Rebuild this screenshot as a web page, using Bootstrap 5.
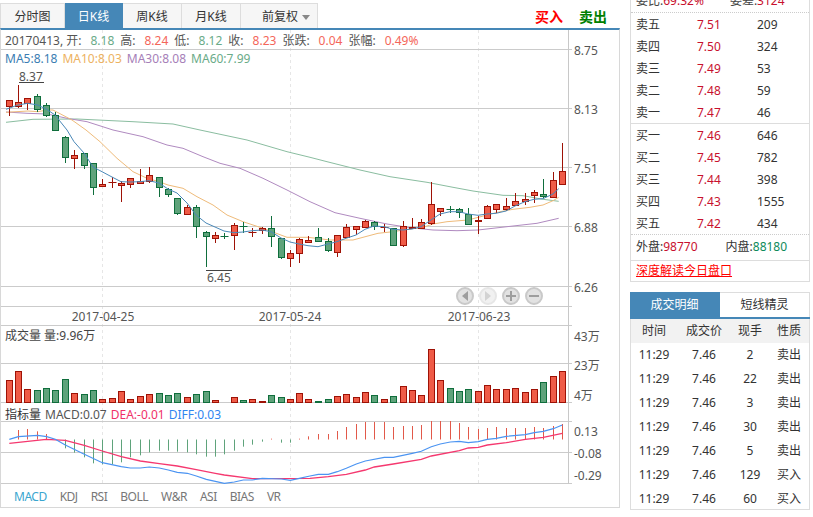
<!DOCTYPE html>
<html lang="zh">
<head>
<meta charset="utf-8">
<title>K线</title>
<link href="https://cdn.jsdelivr.net/npm/bootstrap@5.3.0/dist/css/bootstrap.min.css" rel="stylesheet">
<style>
html,body{margin:0;height:517px;overflow:hidden;background:#fff}
body{font:12px/1.2 "Noto Sans","Noto Sans CJK SC",sans-serif;color:#444}
.stage{width:813px;height:517px}
.leftpane{width:620px;padding-top:3px;position:relative}
.tabbar{height:25px}
.ktab{height:25px;padding-top:2px;border:1px solid #ddd;border-bottom:0;border-left-width:0;background:#f6f6f6;color:#333;display:flex;align-items:center;justify-content:center;text-decoration:none;font-size:12px}
.ktab:first-child{border-left-width:1px}
.ktab-on{background:#4587b7;border-color:#4587b7;color:#fff}
.w1{width:65px}.w2{width:58px}.w3{width:59px}.w4{width:77px;justify-content:flex-start;padding-left:21px}
.caret{display:inline-block;width:0;height:0;border:4px solid transparent;border-top:5px solid #888;border-bottom:0;margin-left:4px}
.tradebtn{font-size:14px;font-weight:700;margin-right:16px;line-height:27px}
.tradebtn-buy{color:#f00}.tradebtn-sell{color:#008000;margin-right:13px}
.chartbox{border:1px solid #d8d8d8;border-top:2px solid #4587b7;height:480px;position:relative}
.chartsvg{display:block;width:618px;height:454px}
.chartsvg text{font:12px "Noto Sans","Noto Sans CJK SC",sans-serif;fill:#555}
.overlay{position:absolute;left:4px;white-space:nowrap;line-height:16px;color:#555;display:flex}
.ov-info{top:3px}.ov-ma{top:21px;gap:5px}.ov-vol{top:298px;color:#444}.ov-macd{top:377px;gap:4px}
.tx-r{color:#f4665a}.tx-g{color:#6aab88}.tx-b{color:#3a7db2}.tx-o{color:#edb261}.tx-p{color:#a680b8}
.tx-pk{color:#f03068}.tx-bl{color:#2f86f0}
.ov-info span{margin-right:9px}
.ov-info span.tx-r,.ov-info span.tx-g{margin-right:6px}
.idxbar{height:24px;gap:13px;padding-left:13px;padding-top:2px;color:#777;align-items:center;letter-spacing:-.5px}
.idx-on{color:#3aa6cf}
.rightpane{width:180px;margin-left:10px}
.quotebox{border:1px solid #ddd;border-top:0;height:282px}
.clipline{height:12px;overflow:hidden;padding-left:5px;border-bottom:1px dotted #ccc;box-sizing:content-box}
.clipline div{margin-top:-8px;line-height:18px;gap:26px}
.qrow{height:22px;padding-left:5px;align-items:center;display:flex;color:#333}
.qrow span:first-child{width:61px}.qrow span:nth-child(2){width:60px;color:#c8102e}
.qgroup{height:111px;padding-top:1px}
.qgroup-a{border-bottom:1px solid #ddd}
.qgroup-b{border-bottom:1px dotted #ccc}
.qsum{height:26px;padding-left:5px;gap:28px;align-items:center;border-bottom:1px solid #ddd;color:#333}
.qlink{height:21px;padding-left:5px;color:#f00;text-decoration:underline;display:flex;align-items:center}
.t-red{color:#c8102e}.t-green{color:#0d8a5a}
.dealbox{margin-top:10px;border:1px solid #ddd;border-top:0;height:218px}
.dealtabs{height:27px;border-bottom:2px solid #4587b7;margin:0 -1px}
.dealtab{width:90px;display:flex;align-items:center;justify-content:center;font-size:12px;color:#333;border-top:1px solid #ddd;border-right:1px solid #ddd;height:25px}
.dealtab-on{background:#4587b7;color:#fff;border-color:#4587b7}
.dealtable{table-layout:fixed;width:178px;margin:0;color:#333;--bs-table-bg:transparent}
.dealtable th,.dealtable td{padding:2px 0 0;height:24px;text-align:center;font-weight:400;border:0;vertical-align:middle;font-size:12px;color:#333}
.dealtable th{background:#f2f2f2;height:23.5px;padding-top:1px}
</style>
</head>
<body>
<div class="stage d-flex">
  <div class="leftpane">
    <div class="tabbar d-flex">
      <a class="ktab w1">分时图</a>
      <a class="ktab ktab-on w2">日K线</a>
      <a class="ktab w3">周K线</a>
      <a class="ktab w3">月K线</a>
      <a class="ktab w4">前复权<i class="caret"></i></a>
      <span class="tradebtn tradebtn-buy ms-auto">买入</span>
      <span class="tradebtn tradebtn-sell">卖出</span>
    </div>
    <div class="chartbox">
      <svg class="chartsvg" id="chart" viewBox="1 30 618 454" xmlns="http://www.w3.org/2000/svg"></svg>
      <div class="overlay ov-info"><span>20170413, 开:</span><span class="tx-g">8.18</span><span>高:</span><span class="tx-r">8.24</span><span>低:</span><span class="tx-g">8.12</span><span>收:</span><span class="tx-r">8.23</span><span>张跌:</span><span class="tx-r">0.04</span><span>张幅:</span><span class="tx-r">0.49%</span></div>
      <div class="overlay ov-ma"><span class="tx-b">MA5:8.18</span><span class="tx-o">MA10:8.03</span><span class="tx-p">MA30:8.08</span><span class="tx-g">MA60:7.99</span></div>
      <div class="overlay ov-vol">成交量 量:9.96万</div>
      <div class="overlay ov-macd"><span style="color:#333">指标量</span><span>MACD:0.07</span><span class="tx-pk">DEA:-0.01</span><span class="tx-bl">DIFF:0.03</span></div>
      <div class="idxbar d-flex"><span class="idx-on">MACD</span><span>KDJ</span><span>RSI</span><span>BOLL</span><span>W&amp;R</span><span>ASI</span><span>BIAS</span><span>VR</span></div>
    </div>
  </div>
  <div class="rightpane">
    <div class="quotebox">
      <div class="clipline"><div class="d-flex"><span>委比:<span class="t-red">69.32%</span></span><span>委差:<span class="t-red">3124</span></span></div></div>
      <div class="qgroup qgroup-a">
        <div class="qrow"><span>卖五</span><span>7.51</span><span>209</span></div>
        <div class="qrow"><span>卖四</span><span>7.50</span><span>324</span></div>
        <div class="qrow"><span>卖三</span><span>7.49</span><span>53</span></div>
        <div class="qrow"><span>卖二</span><span>7.48</span><span>59</span></div>
        <div class="qrow"><span>卖一</span><span>7.47</span><span>46</span></div>
      </div>
      <div class="qgroup qgroup-b">
        <div class="qrow"><span>买一</span><span>7.46</span><span>646</span></div>
        <div class="qrow"><span>买二</span><span>7.45</span><span>782</span></div>
        <div class="qrow"><span>买三</span><span>7.44</span><span>398</span></div>
        <div class="qrow"><span>买四</span><span>7.43</span><span>1555</span></div>
        <div class="qrow"><span>买五</span><span>7.42</span><span>434</span></div>
      </div>
      <div class="qsum d-flex"><span>外盘:<span class="t-red">98770</span></span><span>内盘:<span class="t-green">88180</span></span></div>
      <a class="qlink">深度解读今日盘口</a>
    </div>
    <div class="dealbox">
      <div class="dealtabs d-flex"><div class="dealtab dealtab-on">成交明细</div><div class="dealtab">短线精灵</div></div>
      <table class="table dealtable">
        <colgroup><col style="width:46px"><col style="width:54px"><col style="width:38px"><col style="width:40px"></colgroup>
        <thead><tr><th>时间</th><th>成交价</th><th>现手</th><th>性质</th></tr></thead>
        <tbody>
          <tr><td>11:29</td><td>7.46</td><td>2</td><td>卖出</td></tr>
          <tr><td>11:29</td><td>7.46</td><td>22</td><td>卖出</td></tr>
          <tr><td>11:29</td><td>7.46</td><td>3</td><td>卖出</td></tr>
          <tr><td>11:29</td><td>7.46</td><td>30</td><td>卖出</td></tr>
          <tr><td>11:29</td><td>7.46</td><td>5</td><td>卖出</td></tr>
          <tr><td>11:29</td><td>7.46</td><td>129</td><td>买入</td></tr>
          <tr><td>11:29</td><td>7.46</td><td>60</td><td>买入</td></tr>
        </tbody>
      </table>
    </div>
  </div>
</div>
<script src="https://cdn.jsdelivr.net/npm/bootstrap@5.3.0/dist/js/bootstrap.bundle.min.js"></script>
<script>
// x, bodyTop, bodyBottom, wickTop, wickBottom, r/g
var C=[[9.3,100,105.7,100,116,'r'],[18.3,102.3,105.7,85,108.3,'r'],[27.7,98.3,102.7,98.3,110,'r'],[37.7,96,108.7,94.3,112.3,'g'],[46.7,105.3,115,102.7,117.3,'g'],[55.3,115,130,112,131,'g'],
[65.3,137.3,156.7,136,163,'g'],[74.3,155.3,157.7,150,169.3,'r'],[84.3,153.3,165.3,153,168.7,'g'],[93.3,163.3,186.7,163,195.3,'g'],[102.3,184,186,179.3,187.3,'r'],[112.3,181.7,181.7,177.3,188.3,'r'],[121.3,183.3,185.3,180.7,202.3,'r'],[130.3,178.3,184.3,178,188.3,'r'],[140.3,181.3,183.3,169.3,184,'r'],[149.3,175.3,181.3,167.3,182.7,'r'],[159.3,177.3,187.3,177,196.7,'g'],[168.3,189.3,194.3,188.3,196.7,'g'],[177.3,198.3,213.3,198,215.3,'g'],[187.3,207.3,214.3,204.7,215.3,'r'],[196.3,207.3,225.7,204.7,238.3,'g'],[206.3,232.3,236.3,230.7,267.3,'g'],[215.3,235.3,238.3,232.3,243.3,'r'],[224.3,236.3,236.3,232.7,239,'g'],[234.3,225.3,235.3,223.3,250.3,'r'],[243.3,225.7,225.7,221.7,233.3,'g'],[252.3,232.3,232.3,228.3,236.7,'r'],[262.3,228.3,229.7,227.3,234,'r'],[271.3,228.3,235.7,216,246.7,'g'],[281.3,238.3,256.7,237.7,259.3,'g'],[290.3,253.3,257.7,250.3,267.3,'r'],[299.3,239.3,253.3,238.3,263.3,'r'],[308.3,240,241.7,236,242.7,'r'],
[318.3,236.7,240.7,228.3,241.7,'g'],[328.3,240.7,249.7,238.3,251.7,'g'],[337.3,235.3,252.3,234.7,257.3,'r'],[346.3,227.3,236.7,224.3,237.3,'r'],[356.3,226.3,228.7,226,235,'r'],[365.3,221.3,226.7,220,227.3,'r'],[374.3,222.3,226.3,220.7,230,'g'],[384.3,227.3,227.3,224,232,'r'],[393.3,228.3,245.3,228,245.5,'g'],[403.3,226.3,244.7,221.3,246.7,'r'],[412.3,226.7,228,218.3,229.3,'r'],[421.3,222.3,228.3,219.3,229,'r'],[431.3,204.3,222.7,182.3,225,'r'],[440.3,208.3,210.7,208,216,'r'],[450.3,208.7,208.7,206,213.3,'g'],[459.3,209.3,212.3,208,218.3,'g'],[468.3,214,223.7,208.3,225.3,'g'],[478.3,220,221.3,216,234.3,'r'],[487.3,206.3,218.3,205.3,218.7,'r'],[496.3,204.3,208.7,203.7,213.3,'r'],[506.3,206.3,209.3,198.3,210.7,'r'],[515.3,201.3,205.3,193.3,206.3,'r'],[525.3,199.3,201.3,193.3,205.3,'r'],[534.3,192.3,195.3,190,203.3,'r'],[543.3,194.3,195.7,179.3,198.3,'g'],[553.3,180.3,197.3,172.3,198,'r'],[562.3,171.3,184.3,143.3,185,'r']];
var X=C.map(function(c){return c[0]});
var V=[[181,'r'],[152,'r'],[208,'r'],[211,'g'],[203,'g'],[211,'g'],[176,'g'],[220,'r'],[223,'g'],[211,'g'],[238,'r'],[235,'r'],[214,'r'],[238,'r'],[229,'r'],[223,'r'],[220,'g'],[226,'g'],[220,'g'],[232,'r'],[223,'g'],[214,'g'],[241,'r'],[246,'g'],[232,'r'],[241,'g'],[238,'r'],[243,'r'],[226,'g'],[232,'g'],[238,'r'],[220,'r'],[238,'r'],[243,'g'],[238,'g'],[229,'r'],[223,'r'],[232,'r'],[217,'r'],[226,'g'],[238,'r'],[229,'g'],[199,'r'],[211,'r'],[226,'r'],[88,'r'],[181,'r'],[205,'g'],[214,'g'],[208,'g'],[214,'r'],[196,'r'],[208,'r'],[208,'r'],[205,'r'],[217,'r'],[208,'r'],[187,'g'],[169,'r'],[154,'r']];
// MACD stick ends (zoomed units; baseline 358)
var M=[[18.3,330],[27.7,327],[37.7,334],[46.7,342],[65.3,385],[74.3,398],[84.3,412],[93.3,430],[102.3,433],[112.3,433],[121.3,427],[130.3,412],[140.3,406],[149.3,397],[159.3,392],[168.3,392],[177.3,395],[187.3,397],[196.3,403],[206.3,410],[215.3,410],[224.3,403],[234.3,392],[243.3,380],[252.3,374],[262.3,365],[271.3,356],[281.3,368],[290.3,368],[299.3,356],[308.3,349],[318.3,342],[328.3,342],[337.3,333],[346.3,321],[356.3,312],[365.3,306],[374.3,306],[384.3,306],[393.3,321],[403.3,318],[412.3,318],[421.3,315],[431.3,303],[440.3,303],[450.3,303],[459.3,309],[468.3,321],[478.3,327],[487.3,324],[496.3,321],[506.3,324],[515.3,324],[525.3,324],[534.3,321],[543.3,324],[553.3,318],[562.3,312]];
var L5="6,109.3 18,105 27.7,103.3 37.7,105 46.7,109.3 55,115 67,130 74,141.7 84,153 93,167 102,171.7 112,177 121,181.7 130,182 140,181.7 149,180.7 159,183 168,189 177,193 187,203 196,215 206,223 215,227 224,231 234,232.7 243,232 252,230.7 262,230 271,231.7 281,238 290,242 299,244 308,245.7 318,246.7 328,244 337,241.7 346,238.3 356,235 365,229.3 374,226 384,226.7 393,229.3 403,230 412,229 421,226.7 431,220 440,214 450,211.7 459,211.7 468,214 478,215.3 487,214 496,213.3 506,211 515,206 525,201.7 534,199.3 543,198.7 553,194 558.7,188.7";
var L10="6,112.3 28,111 38,111.7 47,110 53,110 72,120 86,130 100,141.7 117,158.3 133,171.7 147,178.3 159,181.7 168,185 183,188.3 197,196.7 213,205 227,215 243,221.7 263,228.3 287,237.3 308,237.3 330,240 353,240 363,237.3 378,233.3 393,231.7 410,229 423,227.3 433,224 447,221.7 468,220 487,215 500,211.7 513,209.3 530,207.3 543,205 553,200.7 558.7,197.3";
var L30="6,112 27,113.3 47,114 67,118.3 87,121.7 113,130 143,136.7 167,145 183,148.3 203,156.7 220,163.3 240,168.3 263,178.3 287,190 310,201.7 335,212.7 360,218.3 387,224 410,227.7 433,230 457,230.7 478,230 507,226.7 537,223.3 558.7,218.3";
var L60="6,122.3 33,119.3 77,119 133,121.7 173,124 200,130 247,140 287,151.7 310,157.3 327,161.7 360,170 390,176.7 427,182.3 453,187.3 473,191 503,195.3 523,195.7 543,199.3 558.7,201.3";
function z7(a){var o=[];for(var i=0;i<a.length;i+=2)o.push((a[i]/3).toFixed(1)+','+(320+a[i+1]/3).toFixed(1));return o}
function z8(a){var o=[];for(var i=0;i<a.length;i+=2)o.push((310+a[i]/3).toFixed(1)+','+(320+a[i+1]/3).toFixed(1));return o}
var DIFF=z7([28,358,55,350,113,346,140,350,166,358,196,375,253,403,307,428,364,440,391,444,421,444,448,441,478,444,505,450,532,457,562,460,589,468,619,478,673,490,703,486,730,480,757,480,787,475,844,477,871,481,898,475,930,468]).concat(z8([25,463,55,463,82,455,109,445,139,432,166,423,223,412,250,412,307,400,334,394,364,380,391,372,421,366,448,364,475,368,505,365,532,358,559,355,589,349,646,344,673,338,700,334,730,326,757,315])).join(' ');
var DEA=z7([28,370,83,364,139,358,196,361,253,376,307,393,364,410,421,423,478,431,532,438,589,449,646,460,673,465,757,476,930,475]).concat(z8([55,470,109,463,166,450,193,441,250,432,334,418,364,408,448,392,475,384,505,382,532,375,589,368,646,358,673,355,700,352,757,340])).join(' ');
var RED={f:'#ef5b47',s:'#9e1206'},GRN={f:'#5fa37b',s:'#0f6e3c'};
var s='';
function ln(x1,y1,x2,y2,c,w,extra){s+='<line x1="'+x1+'" y1="'+y1+'" x2="'+x2+'" y2="'+y2+'" stroke="'+c+'" stroke-width="'+(w||1)+'" '+(extra||'')+'/>'}
[102.5,290.5,478.5].forEach(function(x){ln(x,30,x,484,'#e6e6e6',1,'stroke-dasharray="3 3"')});
[49.5,108.5,167.5,226.5,286.5,306.5,325.5,363.5,402.5,421.5,452.5,483.5].forEach(function(y){ln(1,y,572,y,'#cbcbcb')});
ln(568.5,30,568.5,484,'#c8c8c8');
function pl(p,c,w){s+='<polyline points="'+p+'" fill="none" stroke="'+c+'" stroke-width="'+(w||1)+'"/>'}
pl(L60,'#8abda0');pl(L30,'#b08ac0');pl(L10,'#efbb7a');
C.forEach(function(c){var k=c[5]=='r'?RED:GRN,x=Math.floor(c[0])+.5,t=Math.round(c[1])+.5,b=Math.round(c[2])+.5;
  ln(x,Math.round(c[3]),x,Math.round(c[4]),k.s);
  if(b-t<1){ln(x-4,t,x+4,t,k.s)}else{s+='<rect x="'+(x-3)+'" y="'+t+'" width="6" height="'+(b-t)+'" fill="'+k.f+'" stroke="'+k.s+'"/>'}
});
pl(L5,'#4a88b8');
V.forEach(function(v,i){var k=v[1]=='r'?RED:GRN,x=Math.floor(X[i])+.5,t=Math.round(320+v[0]/3)+.5;
  s+='<rect x="'+(x-3)+'" y="'+t+'" width="6" height="'+Math.max(402.5-t,0)+'" fill="'+k.f+'" stroke="'+k.s+'"/>'});
M.forEach(function(m){var x=Math.floor(m[0])+.5,y=320+m[1]/3;ln(x,439.5,x,y,m[1]<358?'#e2594a':'#5fa37b')});
pl(DEA,'#f5386f',1.3);pl(DIFF,'#4b94f2',1.2);
ln(19,82.5,44,82.5,'#444');ln(206,270.5,232,270.5,'#444');
function tx(x,y,t,a){s+='<text x="'+x+'" y="'+y+'"'+(a?' text-anchor="'+a+'"':'')+'>'+t+'</text>'}
tx(19,81,'8.37');tx(207,282,'6.45');
[['8.75',55],['8.13',113.5],['7.51',172.5],['6.88',232],['6.26',292],['43万',341],['23万',370],['4万',400],['0.13',436],['-0.08',458],['-0.29',480]].forEach(function(a){tx(574,a[1],a[0])});
[['2017-04-25',103],['2017-05-24',290],['2017-06-23',479]].forEach(function(a){tx(a[1],321,a[0],'middle')});
[[465,1],[488,.45],[511,1],[534,1]].forEach(function(b,i){var x=b[0],y=296;
  s+='<g opacity="'+b[1]+'"><circle cx="'+x+'" cy="'+y+'" r="8" fill="#e2e2e2" stroke="#c9c9c9" stroke-width="2"/>';
  var g='#9e9e9e';
  if(i==0)s+='<path d="M'+(x+3)+' '+(y-5)+'V'+(y+5)+'L'+(x-3)+' '+y+'Z" fill="'+g+'"/>';
  if(i==1)s+='<path d="M'+(x-3)+' '+(y-5)+'V'+(y+5)+'L'+(x+3)+' '+y+'Z" fill="'+g+'"/>';
  if(i==2)s+='<path d="M'+(x-5)+' '+y+'H'+(x+5)+'M'+x+' '+(y-5)+'V'+(y+5)+'" stroke="'+g+'" stroke-width="2"/>';
  if(i==3)s+='<path d="M'+(x-5)+' '+y+'H'+(x+5)+'" stroke="'+g+'" stroke-width="2"/>';
  s+='</g>'});
document.getElementById('chart').innerHTML=s;
</script>
</body>
</html>
